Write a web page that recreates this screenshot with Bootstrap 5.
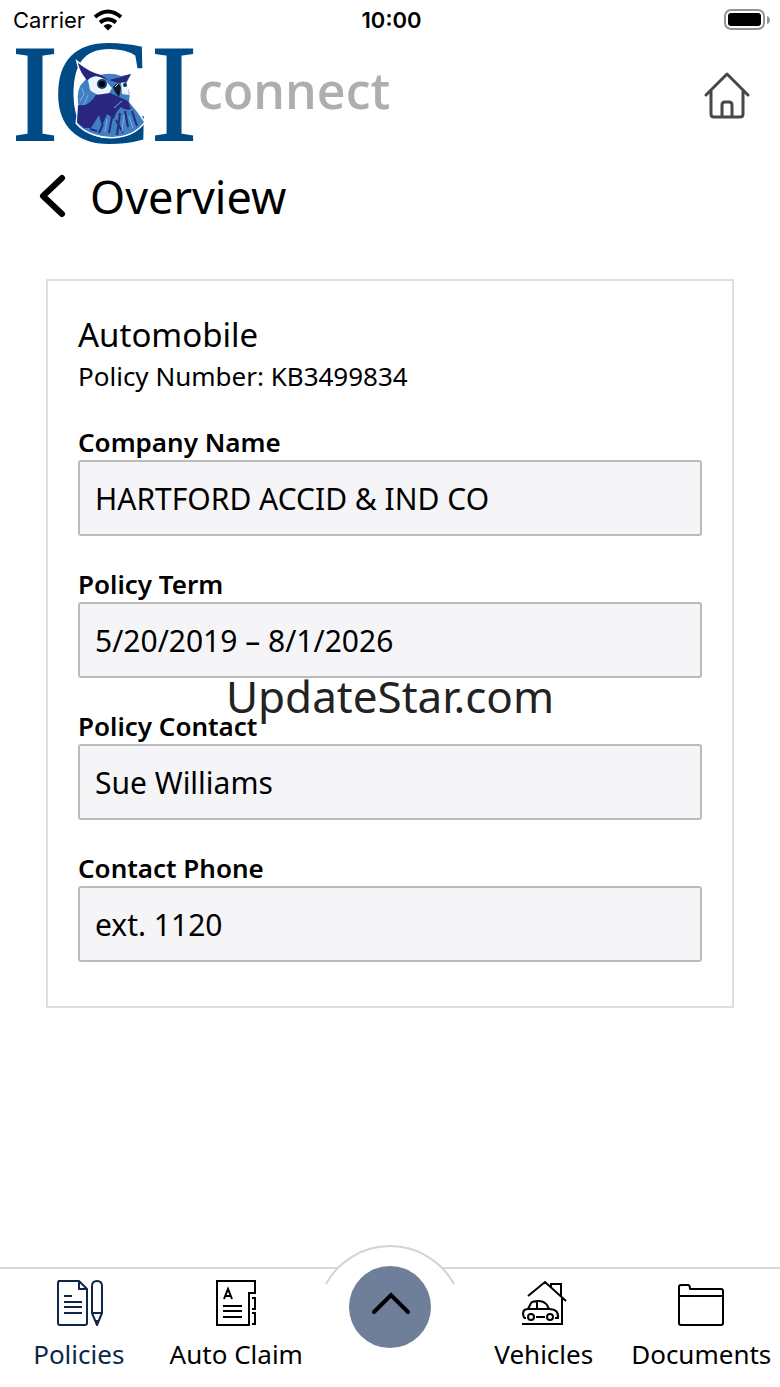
<!DOCTYPE html>
<html lang="en">
<head>
<meta charset="utf-8">
<meta name="viewport" content="width=device-width, initial-scale=1">
<title>ICI connect – Overview</title>
<link href="https://cdn.jsdelivr.net/npm/bootstrap@5.3.0/dist/css/bootstrap.min.css" rel="stylesheet">
<style>
body{font-family:"Noto Sans","Open Sans",sans-serif;color:#000;background:#fff}
svg{display:block;flex:none;overflow:visible}
.status-bar{height:40px;font:400 22px/40px Inter,sans-serif;padding:0 10px 0 13px}
.status-bar>*{flex:1 1 0}
.brand-bar{height:110px;padding:0 30px 0 14px}
.brand-name{font:600 50px/64px "Open Sans",sans-serif;color:#aeaeae;padding-bottom:10px}
.page-head{padding:10px 38px;height:96px}
.page-head h1{font-size:45px;line-height:74px;font-weight:400}
.policy{margin:33px 46px 0;border:2px solid #dfdfdf;padding:30px 30px 44px}
.policy h2{font-size:33px;line-height:48px;font-weight:400}
.policy p{font-size:26px;line-height:34px;margin-bottom:31px}
.policy label{font-size:26px;line-height:36px;font-weight:600}
.policy .form-control{height:76px;font-size:30px;padding:0 15px;color:#000;background:#f5f5f8;border:2px solid #bbb;border-radius:3px}
.fields{gap:30px}
.watermark{font-size:44px;line-height:60px;color:#222;pointer-events:none;padding-top:4px}
.tabs{border-top:2px solid #d8d8d8;height:120px}
.tabs a{font-size:26px;line-height:36px;color:#000;flex:1 1 0;min-width:0;padding-top:9px;gap:8px;white-space:nowrap}
.tabs a.active{color:#0d2749}
.hub{flex:0 0 150px}
.hub svg.arch{position:absolute;left:50%;top:-25px;margin-left:-66px}
.hub button{width:82px;height:82px;background:#707f99;color:#000;margin-top:-3px}
</style>
</head>
<body>
<div class="d-flex flex-column min-vh-100 position-relative">
  <div class="status-bar d-flex align-items-center">
    <div class="d-flex align-items-center gap-2"><span>Carrier</span>
      <svg width="30" height="22" viewBox="0 0 30 22" fill="none" stroke="#000" stroke-width="4"><path d="M2 8Q15-3 28 8M7 13.500Q15 7 23 13.500"/><path d="M10.500 17Q15 13 19.500 17L15 21.500Z" fill="#000" stroke="none"/></svg>
    </div>
    <div class="text-center fw-semibold">10:00</div>
    <div class="d-flex justify-content-end">
      <svg width="46" height="22" viewBox="0 0 46 22"><rect x="1" y="1" width="39" height="19" rx="6" fill="none" stroke="#949494" stroke-width="2"/><rect x="4" y="4" width="33" height="13" rx="3"/><path d="M43 7q3 1 3 4t-3 4z" fill="#949494"/></svg>
    </div>
  </div>
  <header class="brand-bar d-flex align-items-center justify-content-between">
    <a href="#" class="d-flex align-items-center text-decoration-none" aria-label="ICI connect">
      <svg width="184" height="110" viewBox="14 40 184 110">
        <g fill="#004b86" stroke="#004b86" font-family="Liberation Serif,serif">
          <text x="12" y="140" font-size="138" stroke-width="2">I</text>
          <text x="52" y="143" font-size="150" stroke="none">C</text>
          <text x="151" y="140" font-size="138" stroke-width="2">I</text>
        </g>
        <path d="M78 63Q90 73 100 75Q112 72 121 76L131 74L126 84Q131 92 129 102Q137 111 144 122Q134 136 112 137Q88 136 77 123L79 107Q76 96 80 86L86 79Q80 72 78 63Z" fill="#3f7fc2" stroke="#fff" stroke-width="3" paint-order="stroke"/>
        <path d="M78 63Q89 72 101 75L108 80L98 77L87 80Q80 72 78 63ZM109 80L121 77L131 74L126 82L118 83Z" fill="#2a2779"/>
        <path d="M88 80Q95 73 104 79L112 88L108 95Q97 97 90 90ZM121 83Q126 81 128 87L129 95L122 94Z" fill="#e9f4fc"/>
        <circle cx="102" cy="84" r="5" fill="#173968"/><circle cx="102" cy="84" r="3"/><circle cx="125" cy="85" r="2" fill="#132b58"/>
        <path d="M113 87Q119 80 121 88L119 97L115 92Z" fill="#111827"/><path d="M115 87L118 84" stroke="#ddd"/>
        <path d="M78 105Q89 107 96 95L110 93L119 97L128 101L131 109Q126 111 121 107Q115 113 114 119L107 114L102 126L99 115L91 128L84 128L77 122Z" fill="#292780"/>
        <path d="M112 117L109 133M120 113L117 135M125 111L128 127M132 111L137 126M116 120L123 133M103 124L99 133M90 129L97 131" stroke="#292b7d" stroke-width="2" fill="none"/>
        <path d="M82 88L84 94L80 101M88 95L84 105M114 108L122 101M107 119L105 132M124 115L122 132M129 116L133 128" stroke="#79b4e4" stroke-width="1" fill="none"/>
      </svg>
      <span class="brand-name">connect</span>
    </a>
    <a href="#" aria-label="Home"><svg width="46" height="48" viewBox="0 0 46 48" fill="none" stroke="#45474b" stroke-width="3" stroke-linecap="round" stroke-linejoin="round"><path d="M2 24L23 3L44 24M7 20V43Q7 46 10 46H36Q39 46 39 43V20M18 45V34Q18 31 21 31H25Q28 31 28 34V45"/></svg></a>
  </header>
  <main>
    <div class="page-head d-flex align-items-start">
      <a href="#" aria-label="Back" class="pt-2 pe-4"><svg width="28" height="56" viewBox="0 0 28 56" fill="none" stroke="#000" stroke-width="6" stroke-linecap="round" stroke-linejoin="round"><path d="M24 10L5 28L24 46"/></svg></a>
      <h1 class="mb-0">Overview</h1>
    </div>
    <section class="policy">
      <h2 class="mb-0">Automobile</h2>
      <p>Policy Number: KB3499834</p>
      <form class="fields d-flex flex-column">
        <div><label for="company" class="d-block">Company Name</label><input id="company" class="form-control" value="HARTFORD ACCID &amp; IND CO" readonly></div>
        <div><label for="term" class="d-block">Policy Term</label><input id="term" class="form-control" value="5/20/2019 – 8/1/2026" readonly></div>
        <div><label for="contact" class="d-block">Policy Contact</label><input id="contact" class="form-control" value="Sue Williams" readonly></div>
        <div><label for="phone" class="d-block">Contact Phone</label><input id="phone" class="form-control" value="ext. 1120" readonly></div>
      </form>
    </section>
  </main>
  <nav class="tabs d-flex mt-auto" aria-label="Main">
    <a href="#" class="active d-flex flex-column align-items-center text-decoration-none"><svg width="50" height="50" viewBox="0 0 50 50" fill="none" stroke="currentColor" stroke-width="2" stroke-linejoin="round"><path d="M4 3H25L33 11V45Q33 47 31 47H6Q4 47 4 45V5Q4 3 6 3M25 3V11H33M10 18H18M10 24H28M10 29H28M10 35H28M38 8Q38 3 43 3T48 8V35L43 47L38 35ZM38 35H48M41 43H45"/></svg><span>Policies</span></a>
    <a href="#" class="d-flex flex-column align-items-center text-decoration-none"><svg width="50" height="50" viewBox="0 0 50 50" fill="none" stroke="currentColor" stroke-width="2"><path d="M6 3H44V15H38V47H6ZM12 28H31M12 33H31M12 39H31M13 21L17 11L21 21M14 18H20M41 20H44V31H41M41 35H44V46H41"/></svg><span>Auto Claim</span></a>
    <div class="hub position-relative d-flex justify-content-center align-items-start">
      <svg class="arch" width="132" height="42" viewBox="0 0 132 42"><path d="M2 40A73 73 0 0 1 130 40" fill="#fff" stroke="#d3d3d3" stroke-width="2"/></svg>
      <button class="btn rounded-circle p-0 border-0 position-relative d-flex align-items-center justify-content-center" type="button" aria-label="Open menu"><svg width="40" height="32" viewBox="0 0 40 32" fill="none" stroke="currentColor" stroke-width="4" stroke-linecap="round"><path d="M4 21L21 4L38 21"/></svg></button>
    </div>
    <a href="#" class="d-flex flex-column align-items-center text-decoration-none"><svg width="50" height="50" viewBox="0 0 50 50" fill="none" stroke="currentColor" stroke-width="2"><path d="M9 18L26 4L47 23M32 9V6H42V18M43 20V46H3M5 40Q2 31 9 31L12 25Q14 23 19 23Q25 23 28 27L30 31Q40 31 39 40H36M5 40H7M9 31H31M18 23V31M17 39H26"/><circle cx="12" cy="39" r="3"/><circle cx="31" cy="39" r="3"/></svg><span>Vehicles</span></a>
    <a href="#" class="d-flex flex-column align-items-center text-decoration-none"><svg width="50" height="50" viewBox="0 0 50 50" fill="none" stroke="currentColor" stroke-width="2" stroke-linejoin="round"><path d="M3 18V9Q3 7 5 7H12Q14 7 14 11H45Q47 11 47 13V45Q47 47 45 47H5Q3 47 3 45V18H47"/></svg><span>Documents</span></a>
  </nav>
  <div class="watermark position-absolute top-50 start-50 translate-middle">UpdateStar.com</div>
</div>
<script src="https://cdn.jsdelivr.net/npm/bootstrap@5.3.0/dist/js/bootstrap.bundle.min.js"></script>
</body>
</html>
